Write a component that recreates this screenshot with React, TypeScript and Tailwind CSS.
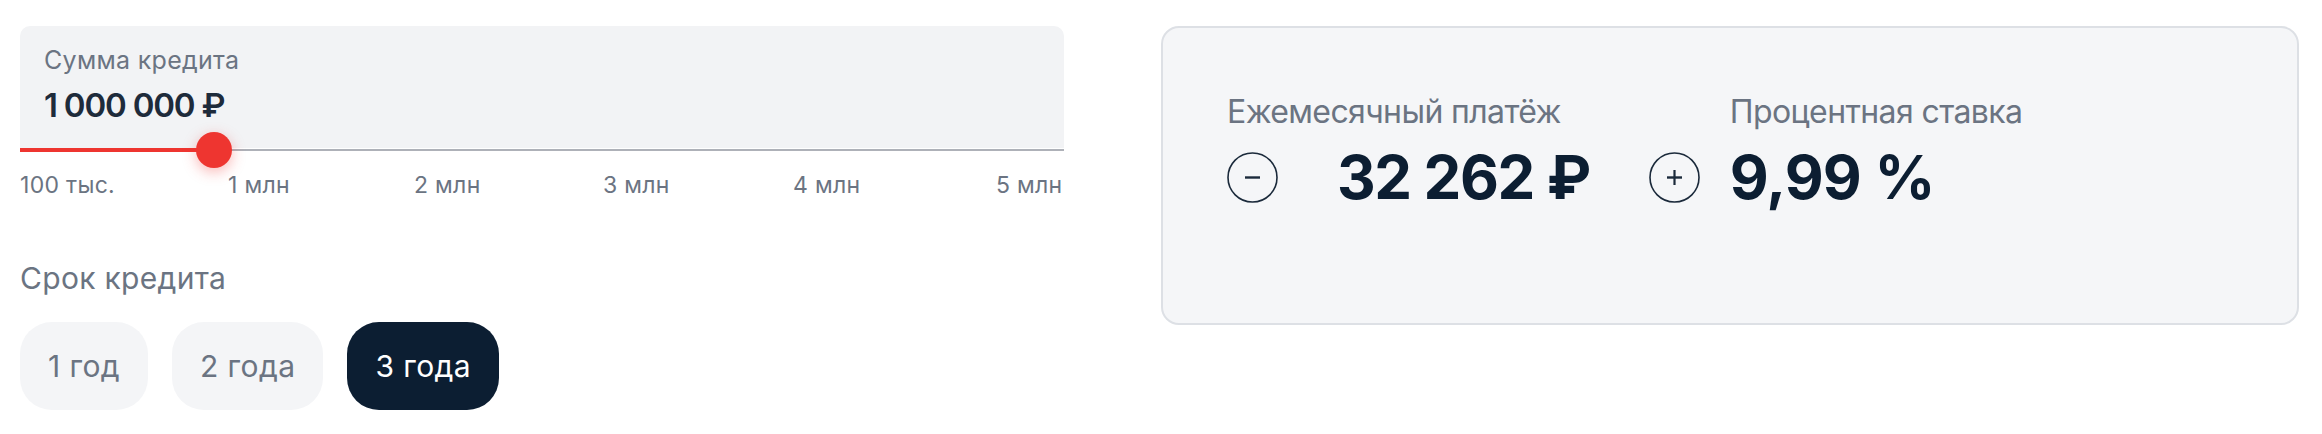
import React from "react";

const ticks = [
  { label: "100 тыс.", w: "w-[208px]" },
  { label: "1 млн", w: "w-[186px]" },
  { label: "2 млн", w: "w-[189px]" },
  { label: "3 млн", w: "w-[190px]" },
  { label: "4 млн", w: "w-[203px]" },
  { label: "5 млн", w: "" },
];

const terms = ["1 год", "2 года", "3 года"];

function CircleButton({ sign }: { sign: "minus" | "plus" }) {
  return (
    <svg width="51" height="51" viewBox="0 0 51 51" className="shrink-0">
      <circle cx="25.5" cy="25.5" r="24.5" fill="none" stroke="#1b2a3b" strokeWidth="1.6" />
      <line x1="18" y1="25.5" x2="33" y2="25.5" stroke="#1b2a3b" strokeWidth="2.4" />
      {sign === "plus" && (
        <line x1="25.5" y1="18" x2="25.5" y2="33" stroke="#1b2a3b" strokeWidth="2.2" />
      )}
    </svg>
  );
}

export default function App() {
  const active = 2;
  return (
    <div className="flex min-h-[434px] bg-white pl-[20px] pt-[26px] font-['Inter',sans-serif]">
      {/* left: amount slider + term */}
      <div className="flex w-[1044px] flex-col">
        <div className="rounded-t-[10px] bg-[#f2f3f5] px-[24px] pb-[23px] pt-[18px]">
          <div className="text-[25px] leading-[32px] tracking-[0.3px] text-[#6b7482]">Сумма кредита</div>
          <div className="mt-[9px] text-[33px] font-semibold leading-[40px] tracking-[-1.2px] text-[#1e2b3b]">
            1&nbsp;000&nbsp;000&nbsp;₽
          </div>
        </div>
        <div className="relative flex h-[4px] items-center">
          <div className="h-[4px] w-[194px] bg-[#ee3530]" />
          <div className="h-[2px] flex-1 bg-[#aeb1b8]" />
          <div className="absolute left-[176px] top-[-16px] h-[36px] w-[36px] rounded-full bg-[#ee3530] shadow-[0_4px_14px_rgba(238,53,48,0.35)]" />
        </div>
        <div className="mt-[19px] flex text-[23px] leading-[28px] tracking-[0.3px] text-[#6b7482]">
          {ticks.map((t) => (
            <div key={t.label} className={t.w}>
              {t.label}
            </div>
          ))}
        </div>

        <div className="mt-[61px] text-[30px] leading-[36px] tracking-[0.3px] text-[#6b7482]">Срок кредита</div>
        <div className="mt-[26px] flex gap-[24px]">
          {terms.map((t, i) => (
            <button
              key={t}
              className={
                i === active
                  ? "flex h-[88px] items-center rounded-[32px] bg-[#0c1e32] px-[28px] text-[30px] tracking-[0.4px] text-white"
                  : "flex h-[88px] items-center rounded-[32px] bg-[#f4f5f7] px-[28px] text-[30px] tracking-[0.4px] text-[#6b7482]"
              }
            >
              {t}
            </button>
          ))}
        </div>
      </div>

      {/* right: result card */}
      <div className="ml-[97px] flex h-[299px] w-[1138px] rounded-[18px] border-2 border-[#dde0e5] bg-[#f5f6f8] pl-[64px] pt-[64px]">
        <div className="flex flex-col">
          <div className="text-[32px] leading-[40px] tracking-[-0.6px] text-[#6b7482]">Ежемесячный платёж</div>
          <div className="mt-[15px] flex h-[60px] items-center">
            <CircleButton sign="minus" />
            <div className="ml-[59px] text-[60px] font-bold leading-[60px] tracking-[-1.4px] text-[#0c1e32]">
              32&nbsp;262&nbsp;₽
            </div>
            <div className="ml-[59px]">
              <CircleButton sign="plus" />
            </div>
          </div>
        </div>
        <div className="ml-[30px] flex flex-col">
          <div className="text-[32px] leading-[40px] tracking-[-0.6px] text-[#6b7482]">Процентная ставка</div>
          <div className="mt-[15px] text-[60px] font-bold leading-[60px] tracking-[-0.8px] text-[#0c1e32]">
            9,99&nbsp;%
          </div>
        </div>
      </div>
    </div>
  );
}
